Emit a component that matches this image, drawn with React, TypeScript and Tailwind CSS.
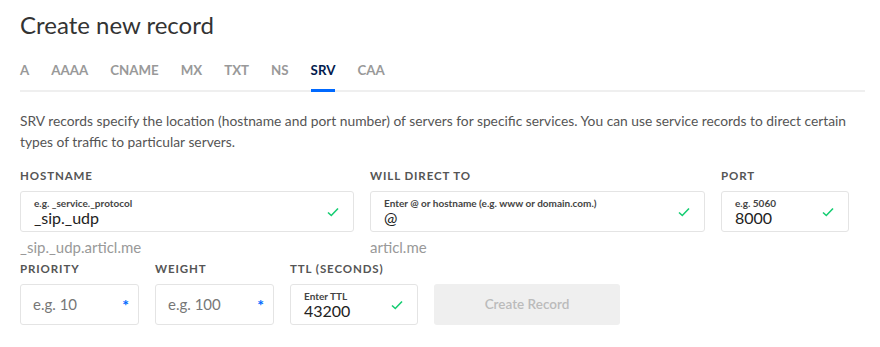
import React from 'react';

const font = { fontFamily: 'Lato, "Open Sans", "Liberation Sans", sans-serif' };

const tabs = ['A', 'AAAA', 'CNAME', 'MX', 'TXT', 'NS', 'SRV', 'CAA'];

function Check() {
  return (
    <svg width="12" height="10" viewBox="0 0 12 10" className="shrink-0">
      <path d="M1 5.5 L4.3 8.5 L11 1.5" fill="none" stroke="#15cd72" strokeWidth="1.6" />
    </svg>
  );
}

function Star() {
  return <span className="text-[16px] leading-none text-[#0069ff] font-bold">*</span>;
}

function FilledInput({ hint, value, width }: { hint: string; value: string; width: string }) {
  return (
    <div className={`${width} h-[41px] border border-[#e4e4e4] rounded-[3px] flex items-center justify-between pl-[13px] pr-[14px]`}>
      <div className="flex flex-col pt-[1px]">
        <span className="text-[10px] font-bold text-[#444] leading-[12px]">{hint}</span>
        <span className="text-[16px] text-[#222] leading-[18px]">{value}</span>
      </div>
      <Check />
    </div>
  );
}

function EmptyInput({ placeholder, width }: { placeholder: string; width: string }) {
  return (
    <div className={`${width} h-[41px] border border-[#e4e4e4] rounded-[3px] flex items-center justify-between pl-[12px] pr-[9px]`}>
      <span className="text-[15px] text-[#777]">{placeholder}</span>
      <Star />
    </div>
  );
}

function Label({ children }: { children: React.ReactNode }) {
  return <div className="text-[11.5px] font-bold tracking-[0.9px] text-[#555] mb-[8px] leading-[14px]">{children}</div>;
}

export default function App() {
  return (
    <div className="w-[880px] h-[347px] bg-white px-[20px] pt-[8px]" style={font}>
      <h1 className="text-[24px] font-normal text-[#333] leading-[34px]">Create new record</h1>

      <div className="mt-[20px] w-[845px] border-b-2 border-[#efefef] flex gap-[22px]">
        {tabs.map((t) => (
          <div
            key={t}
            className={`text-[13.3px] font-bold leading-[17px] ${
              t === 'SRV' ? 'text-[#031b4e] border-b-[3px] border-[#0069ff] -mb-[2px] pb-[10px]' : 'text-[#999] pb-[11px]'
            }`}
          >
            {t}
          </div>
        ))}
      </div>

      <p className="mt-[18px] text-[13.8px] leading-[21px] text-[#555] w-[850px]">
        SRV records specify the location (hostname and port number) of servers for specific services. You can use service records to direct certain types of traffic to particular servers.
      </p>

      <div className="mt-[17px] flex gap-[16px]">
        <div>
          <Label>HOSTNAME</Label>
          <FilledInput width="w-[334px]" hint="e.g. _service._protocol" value="_sip._udp" />
          <div className="mt-[6px] text-[15px] text-[#999] leading-[18px]">_sip._udp.articl.me</div>
        </div>
        <div>
          <Label>WILL DIRECT TO</Label>
          <FilledInput width="w-[335px]" hint="Enter @ or hostname (e.g. www or domain.com.)" value="@" />
          <div className="mt-[6px] text-[15px] text-[#999] leading-[18px]">articl.me</div>
        </div>
        <div>
          <Label>PORT</Label>
          <FilledInput width="w-[128px]" hint="e.g. 5060" value="8000" />
        </div>
      </div>

      <div className="mt-[6px] flex gap-[16px] items-end">
        <div>
          <Label>PRIORITY</Label>
          <EmptyInput width="w-[119px]" placeholder="e.g. 10" />
        </div>
        <div>
          <Label>WEIGHT</Label>
          <EmptyInput width="w-[119px]" placeholder="e.g. 100" />
        </div>
        <div>
          <Label>TTL (SECONDS)</Label>
          <FilledInput width="w-[128px]" hint="Enter TTL" value="43200" />
        </div>
        <button className="w-[186px] h-[41px] rounded-[3px] bg-[#efefef] text-[#bbb] text-[13.5px] font-semibold">
          Create Record
        </button>
      </div>
    </div>
  );
}
